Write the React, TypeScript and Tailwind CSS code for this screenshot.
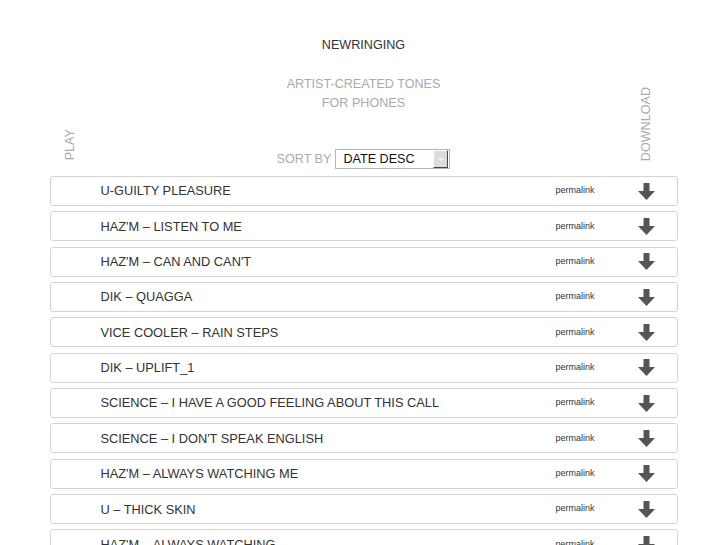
import React from 'react';

const tones: string[] = [
  'U-GUILTY PLEASURE',
  "HAZ'M \u2013 LISTEN TO ME",
  "HAZ'M \u2013 CAN AND CAN'T",
  'DIK \u2013 QUAGGA',
  'VICE COOLER \u2013 RAIN STEPS',
  'DIK \u2013 UPLIFT_1',
  'SCIENCE \u2013 I HAVE A GOOD FEELING ABOUT THIS CALL',
  "SCIENCE \u2013 I DON'T SPEAK ENGLISH",
  "HAZ'M \u2013 ALWAYS WATCHING ME",
  'U \u2013 THICK SKIN',
  "HAZ'M \u2013 ALWAYS WATCHING",
];

const DownArrow: React.FC = () => (
  <svg width="17" height="17" viewBox="0 0 17 17" className="block">
    <path d="M5.5 0 H11.5 V8 H17 L8.5 17 L0 8 H5.5 Z" fill="#555555" />
  </svg>
);

const ToneRow: React.FC<{ title: string }> = ({ title }) => (
  <div className="flex h-[30px] shrink-0 items-center rounded-[3px] border border-[#d4d4d4] bg-white">
    <div className="flex-1 truncate pl-[50px] text-[12.8px] text-[#333]">{title}</div>
    <a href="#" className="mr-[21px] text-[9px] text-[#333]">permalink</a>
    <div className="flex w-[61px] justify-center">
      <DownArrow />
    </div>
  </div>
);

export default function App() {
  return (
    <div className="h-[545px] overflow-hidden bg-white font-['Liberation_Sans',Arial,sans-serif]">
      <div className="mx-auto w-[628px] pt-[36px]">
        <h1 className="text-center text-[12.6px] leading-[19px] text-[#333]">NEWRINGING</h1>

        <div className="mt-[20px] grid grid-cols-[62px_1fr_62px] items-end">
          <div className="mb-[16px] pl-[15px]">
            <div className="text-[12.6px] leading-[11px] text-[#aaa] [writing-mode:vertical-rl] rotate-180">
              PLAY
            </div>
          </div>

          <div className="flex flex-col items-center">
            <p className="text-center text-[12.6px] leading-[19px] text-[#aaa]">
              ARTIST-CREATED TONES
              <br />
              FOR PHONES
            </p>
            <div className="mt-[36px] mb-[7px] flex items-center gap-[4px]">
              <span className="text-[12.6px] text-[#aaa]">SORT BY</span>
              <div className="flex h-[20px] w-[115px] items-center justify-between border border-[#b5b5b5] bg-white pl-[7px] pr-[1px]">
                <span className="text-[12.6px] text-[#111]">DATE DESC</span>
                <div className="flex h-[18px] w-[15px] items-center justify-center border-t border-l border-t-white border-l-white border-r border-b border-r-[#444] border-b-[#444] bg-[#dcdcdc]">
                  <div className="h-0 w-0 border-x-[3px] border-t-[3px] border-x-transparent border-t-[#f4f4f4]" />
                </div>
              </div>
            </div>
          </div>

          <div className="mb-[15px] flex justify-center">
            <div className="text-[12.6px] leading-[11px] text-[#aaa] [writing-mode:vertical-rl] rotate-180">
              DOWNLOAD
            </div>
          </div>
        </div>

        <div className="flex flex-col gap-[5.35px]">
          {tones.map((t) => (
            <ToneRow key={t} title={t} />
          ))}
        </div>
      </div>
    </div>
  );
}
